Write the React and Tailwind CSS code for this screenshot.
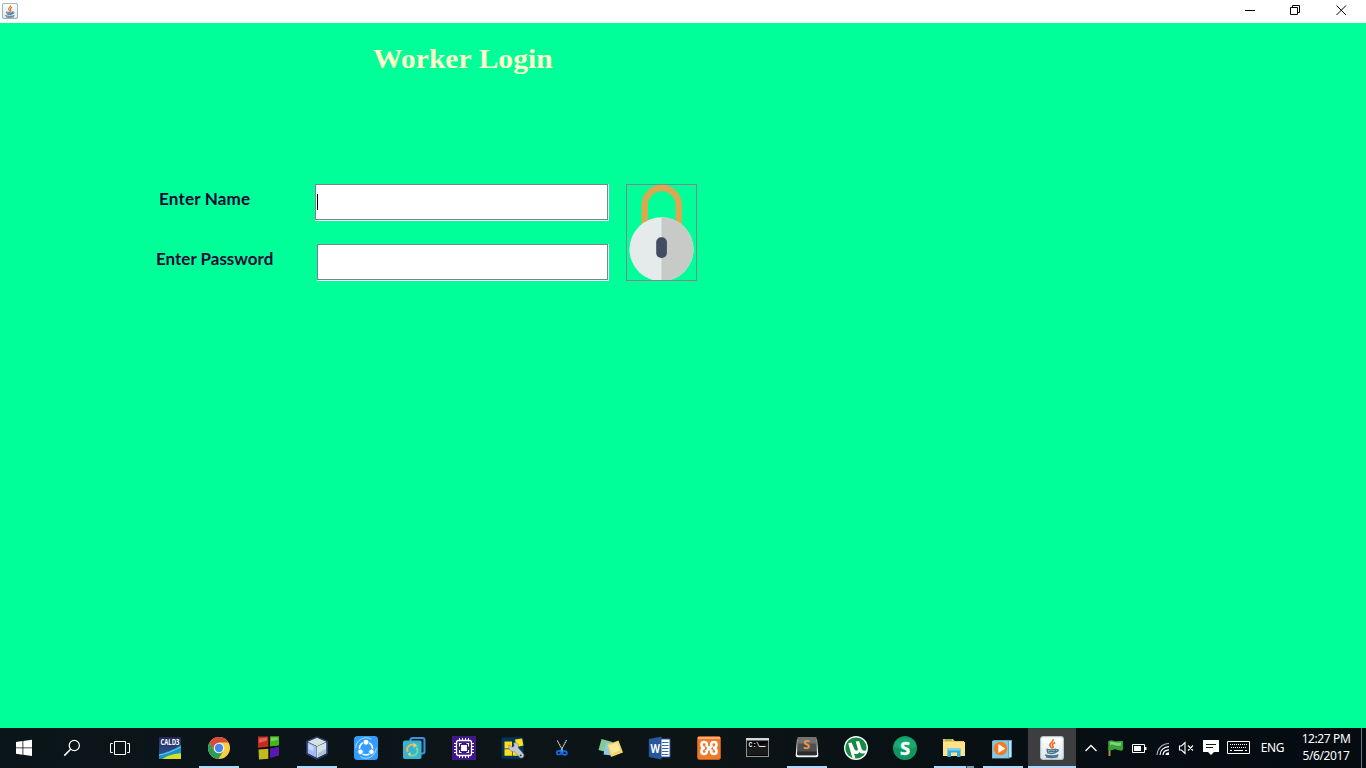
const Java = ({ className, edge = "#b9c2c8" }) => (
  <svg viewBox="0 0 24 24" className={className}>
    <defs>
      <linearGradient id="jv" x1="0" y1="0" x2="0" y2="1">
        <stop offset="0" stopColor="#fff" />
        <stop offset="1" stopColor="#dfe6e9" />
      </linearGradient>
    </defs>
    <rect x="0.6" y="0.6" width="22.800" height="22.800" rx="2.500" fill="url(#jv)" stroke={edge} strokeWidth="1.200" />
    <path d="M12.800 3.300c1.500 2.500-4.200 4-2.800 6.400.5 1 1.600 1.600 1.800 2.600M15.200 6.600c-3 1.200-3.200 2.400-2.200 3.600.5.8 0 1.600-.6 2.200" fill="none" stroke="#e9712a" strokeWidth="1.700" />
    <path d="M6.500 13.200c1.800.9 8 .9 9.700 0M7 13.600l.8 3.200c2 .7 5.200.7 7.200 0l.8-3.200M16 13.800c3-1 3 2-.8 2.400M8.500 15.500h6.500M5 18.800c3.500 1.500 10 1.500 13.500 0M6 20.800c4 1 8.500.8 12-.2" fill="none" stroke="#45718f" strokeWidth="1.400" />
  </svg>
);

const S = ({ children }) => (
  <svg viewBox="0 0 24 24" className="h-6 w-6 shrink-0 overflow-visible">{children}</svg>
);

const Windows = () => (
  <S><path d="M4 6l6.500-1v6.500H4zM11.300 4.900L20 3.800v7.700h-8.700zM4 12.300h6.500v6.500l-6.500-1zM11.300 12.300H20V20l-8.700-1.200z" fill="#fff" /></S>
);
const Search = () => (
  <S><g fill="none" stroke="#fff" strokeWidth="1.200"><circle cx="14.300" cy="9.500" r="5.100" /><path d="M10.600 13.200L4.300 19.600" strokeWidth="1.500" /></g></S>
);
const TaskView = () => (
  <S><path d="M6.500 5.500h11v13h-11zM4.800 7.500H2.500v9h2.300M19.200 7.500h2.300v9h-2.300" fill="none" stroke="#fff" /></S>
);
const Cald = () => (
  <S>
    <defs><linearGradient id="cald" x1="0" y1="0" x2="0" y2="1"><stop stopColor="#24265a" /><stop offset="1" stopColor="#335b9e" /></linearGradient></defs>
    <rect x="1" y="1" width="22" height="22" fill="url(#cald)" />
    <path d="M1 19C8 16 15 14 23 9v9L1 23z" fill="#1395c7" />
    <path d="M1 19c7-1 14-4 22-8" stroke="#75cbe5" fill="none" />
    <path d="M4 23c6-4 12-5 19-6v6z" fill="#d5df28" />
    <text x="2.500" y="8.500" fontSize="8.500" textLength="19" lengthAdjust="spacingAndGlyphs" fontFamily="Open Sans, sans-serif" fontWeight="700" fill="#fff">CALD3</text>
  </S>
);
const Chrome = () => (
  <S>
    <circle cx="12" cy="12" r="11" fill="#fccc43" />
    <path d="M2.500 6.500A11 11 0 0 1 21.500 6.500H12L7.200 14.800z" fill="#d84b3c" />
    <path d="M2.500 6.500A11 11 0 0 0 11.500 23l5-8.300-4.500 2-4.800-2z" fill="#2b9d5b" />
    <circle cx="12" cy="12" r="5.300" fill="#f4f5ef" /><circle cx="12" cy="12" r="4.200" fill="#4688ec" />
  </S>
);
const Blocks = () => (
  <S>
    <path d="M2 .5h10.500V11.500L2 12z" fill="#c72a20" /><path d="M14 .3h9v9.200l-9 1.200z" fill="#43b51b" />
    <path d="M2.500 13.500l10-.8v10L3 23.500z" fill="#c2b921" /><path d="M13.800 12.500l9.200-2v9l-9 2.500z" fill="#5718b5" />
    <path d="M3 2.500l8-1v3L3 7z" fill="#ed8880" opacity=".6" /><path d="M15 1.500h7v2l-7 2z" fill="#a8e48c" opacity=".6" />
    <path d="M13.200 0v24M1.500 12.500L23 10.200" stroke="#090a0a" strokeWidth="1.100" />
  </S>
);
const NetBeans = () => (
  <S>
    <path d="M12 .8l10.300 4.500V18L12 23.200 1.700 18V5.300z" fill="#16264d" stroke="#343f83" />
    <path d="M12 1.800l9.300 4-9.300 4.500-9.300-4.500z" fill="#d5e3df" />
    <path d="M2.700 6.300l9 4.300v11.200l-9-4.500z" fill="#a3b9f2" /><path d="M12 10.500l9.300-4.300v11L12 21.900z" fill="#d5e2e5" />
    <path d="M3.500 8l5 2.300v5L3.500 13z" fill="#dae8ff" opacity=".7" /><path d="M13 17l8-4v4l-8 4z" fill="#a6bdc8" opacity=".8" />
  </S>
);
const Shareit = () => (
  <S>
    <rect width="24" height="24" rx="3.500" fill="#329cff" />
    <circle cx="12" cy="12" r="10.300" fill="none" stroke="#a6dcff" strokeWidth="1" strokeDasharray="22 10" />
    <circle cx="12" cy="12.500" r="6.500" fill="none" stroke="#fff" strokeWidth="1.600" />
    <g fill="#fff" stroke="#329cff" strokeWidth=".9"><circle cx="12" cy="6.200" r="3" /><circle cx="6.500" cy="15.800" r="2.800" /><circle cx="17.500" cy="15.800" r="2.800" /></g>
  </S>
);
const Sync = () => (
  <S>
    <rect x="7.500" y="2" width="14" height="15.500" rx="2" fill="#102a3b" stroke="#4490d5" strokeWidth="2" />
    <rect x="0" y="4.500" width="18.500" height="18.500" rx="2" fill="#36b5cf" />
    <path d="M4.800 16a5 5 0 0 1 7.200-6.500" fill="none" stroke="#f3b35b" strokeWidth="2" />
    <path d="M13.300 11.500a5 5 0 0 1-7.300 6.800" fill="none" stroke="#77d89b" strokeWidth="2" />
    <path d="M10.500 6.800l4 3-4 2zM7.500 16v4.500l-3-2.500z" fill="#e2d276" />
  </S>
);
const Cpu = () => (
  <S>
    <rect width="24" height="24" fill="#411887" />
    <g stroke="#fff" fill="none" strokeWidth="1"><rect x="4.500" y="4.500" width="15" height="15" rx="2" strokeWidth="1.300" />
      <path d="M7.500 2V4m3-2V4m3-2V4m3-2V4M7.500 20v2m3-2v2m3-2v2m3-2v2M2 7.500H4m-2 3H4m-2 3H4m-2 3H4M20 7.500h2m-2 3h2m-2 3h2m-2 3h2" />
      <path d="M7 7.500h2.500m5 0H17M7 16.500h2.500m5 0H17M7.500 8v2.500m9-2.500v2.500M7.500 14v2.500m9-2.500v2.500" />
    </g>
    <rect x="9" y="9" width="6" height="6" fill="#fff" />
  </S>
);
const Tools = () => (
  <S>
    <rect x=".5" y="1" width="22" height="22" rx="2" fill="#073453" stroke="#042139" />
    <path d="M3.500 5.500h7.500v7h-7.500zM3.500 13.200h7.500v6.500h-7.500zM11.700 13.200h6v6.500h-6zM14 3.500l7-1 1.500 7-7 1.500z" fill="#ffdf1c" />
    <path d="M8 8.700l3.200 2.500 2-1.300-.5-3.200c4-.5 5.500 2 4.500 5l5.500 6.500c1 2.500-1.500 4.800-3.800 3.300l-5.500-6C9.500 16.500 7 13 8 8.700z" fill="#c5c8cc" stroke="#68727b" strokeWidth=".5" />
    <circle cx="19.700" cy="19.300" r=".9" fill="#073453" />
  </S>
);
const Scissors = () => (
  <S>
    <path d="M7.300 4.500l6 11M16.500 4l-6 11.500" stroke="#bdbdbd" strokeWidth="1.300" strokeDasharray="1.500 .5" />
    <g fill="none" stroke="#126df0" strokeWidth="1.700"><ellipse cx="9" cy="16.700" rx="2.200" ry="1.800" /><ellipse cx="14.700" cy="17" rx="2.200" ry="1.800" /></g>
    <path d="M11 13.500h2v2h-2z" fill="#22ace5" />
  </S>
);
const Notes = () => (
  <S>
    <path d="M2.500 3l11 3-2.500 11L-.5 14z" fill="#83c994" /><path d="M7 6.500l8 1-2 12-8.500-1z" fill="#92c7e9" />
    <path d="M8.500 8.500l11-4L24 16.500l-12 4.500z" fill="#f4d466" /><path d="M10 9.500l9-3 2 7c-3 3-7 2-8 5z" fill="#ffe89b" />
  </S>
);
const Word = () => (
  <S>
    <path d="M12 3h10v18H12z" fill="#fff" stroke="#2d5799" />
    <path d="M14 6.500h6.500m-6.500 3h6.500m-6.500 3h6.500m-6.500 3h6.500m-6.500 3h6.500" stroke="#3869af" strokeWidth="1" />
    <path d="M.8 3l12.700-2.500v23L.8 21z" fill="#28569d" />
    <text x="2.500" y="16.500" fontSize="11.500" textLength="9.500" lengthAdjust="spacingAndGlyphs" fontFamily="Open Sans, sans-serif" fontWeight="700" fill="#fff">W</text>
  </S>
);
const Xampp = () => (
  <S>
    <rect x=".5" y=".5" width="23" height="23" rx="2" fill="#ef792b" stroke="#bb5921" />
    <path d="M1 1h22v2H1z" fill="#f6ad78" />
    <path d="M15.500 9.500L12.500 12 9 15.500M15 15.500L12 12.300 9.500 9.500" stroke="#fff" strokeWidth="2.400" />
    <path d="M9.800 10V8.200c0-3-5.300-3-5.300.3 0 2.300 1 3.500 3.500 3.500-2.500 0-3.500 1.300-3.500 3.500 0 3.300 5.300 3.300 5.300.3V14M14.200 10V8.200c0-3 5.300-3 5.300.3 0 2.300-1 3.500-3.500 3.500 2.500 0 3.500 1.300 3.500 3.500 0 3.300-5.300 3.300-5.300.3V14" fill="none" stroke="#fff" strokeWidth="2.600" />
  </S>
);
const Terminal = () => (
  <S>
    <rect x=".5" y="2.500" width="22" height="18" fill="#060606" stroke="#929292" /><path d="M0 2h23v2.500H0z" fill="#d4d8d9" />
    <path d="M1 12l21-5v12H1z" fill="#252525" opacity=".65" />
    <text x="2.500" y="11" fontSize="6.500" fontFamily="Liberation Mono, monospace" fontWeight="700" fill="#eee">C:\</text><path d="M13.500 10.500h6" stroke="#eee" />
  </S>
);
const Sublime = () => (
  <S>
    <path d="M2 3L.7 19.500q0 1.800 1.800 1.800h19q1.800 0 1.800-1.800L22 3z" fill="#f3f3f3" />
    <path d="M2.500 1h19l.5 17.500-1.500 1h-17l-1.500-1z" fill="#505050" /><path d="M2.300 15.500h19.400v3.500H2.300z" fill="#2b2b2b" />
    <path d="M2.800 1h18.400l.3 6.500H2.500z" fill="#737373" />
    <text x="11.500" y="13" fontSize="13" fontFamily="Open Sans, sans-serif" fontWeight="700" textAnchor="middle" fill="#eb9841">S</text>
  </S>
);
const Torrent = () => (
  <S>
    <circle cx="12" cy="12" r="12" fill="#f6fff7" /><circle cx="12" cy="12" r="10.600" fill="#178846" />
    <path d="M4.200 7.200l3.300-.6 3 6.700c1 2 3.800 1.700 3.300-.6L11.700 5.500l3.400-.6 2.400 7.700c.6 2 2 2.600 5.300 1.700l-.8 2.500c-3 1.400-5.600.8-6.700-.8-1 2-3 2.700-5.300 1.600l1.500 5-3.200-.9z" fill="#fff" />
  </S>
);
const Skype = () => (
  <S><circle cx="12" cy="12" r="12" fill="#119662" /><path d="M.5 10a12 12 0 0 1 23 0c-6 4-15 5-23 0z" fill="#19aa70" />
    <text x="12" y="18.500" fontSize="18.500" fontFamily="Open Sans, sans-serif" fontWeight="700" textAnchor="middle" fill="#fff" stroke="#fff" strokeWidth=".4">S</text></S>
);
const Folder = () => (
  <S>
    <path d="M1 3h10l1.500 2H22v15H1z" fill="#edc75a" /><path d="M1 6h22v14H1z" fill="#ffe28a" /><path d="M3 4h7" stroke="#4aa666" />
    <path d="M5.500 21v-8.500h13V21H15v-4.500H9V21z" fill="#2eaee6" /><path d="M5.500 12.500h13v2h-13z" fill="#7bd3f5" />
  </S>
);
const Media = () => (
  <S>
    <path d="M1 5l2-1h18v17l-3 1.500H1z" fill="#5fa8cc" /><path d="M1.500 5H17v17H1.500z" fill="#8ac7df" /><path d="M18 5h2v16h-2z" fill="#b8e4ee" />
    <circle cx="9.500" cy="12.500" r="6.800" fill="#f47c20" /><path d="M7.300 8l7 4.500-7 4.500z" fill="#fff" />
  </S>
);

const apps = [
  { Icon: Cald }, { Icon: Chrome, open: true }, { Icon: Blocks }, { Icon: NetBeans, open: true }, { Icon: Shareit },
  { Icon: Sync }, { Icon: Cpu }, { Icon: Tools }, { Icon: Scissors }, { Icon: Notes }, { Icon: Word }, { Icon: Xampp },
  { Icon: Terminal }, { Icon: Sublime, open: true }, { Icon: Torrent }, { Icon: Skype }, { Icon: Folder, open: true, stacked: true },
  { Icon: Media, open: true },
];

function Tray() {
  return (
    <div className="flex h-10 items-center pl-[3px] font-['Noto_Sans',sans-serif] text-xs text-white">
      <S><path d="M6.500 15l5.500-5.500 5.500 5.500" fill="none" stroke="#fff" strokeWidth="1.300" /></S>
      <S>
        <path d="M6.500 5v15" stroke="#bd854c" strokeWidth="2" />
        <path d="M5.500 5c4-2.500 6 1.500 9.500 0h5v9c-4 2-6-1.500-9-.5L5.500 15z" fill="#36a337" />
        <path d="M7 6c3-1 5 1.500 11 .5v3C13 11 10 7 7 9z" fill="#83d37b" />
      </S>
      <S><path d="M5.500 8.500h12v8h-12z" fill="none" stroke="#fff" /><path d="M7 10h7v5H7zM18 11h1.500v3H18z" fill="#fff" /></S>
      <S>
        <g fill="none" strokeWidth="1.200"><path d="M6 19C6.500 12.500 11 7.800 18 7.500" stroke="#a9b0b3" /><path d="M9 19c.3-4.500 3.500-8 9-8.300M12 19c.2-3 2.300-5 6-5.200" stroke="#fff" /></g>
        <path d="M14.500 19c0-1.800 1.500-2.800 3.500-2.800V19z" fill="#fff" />
      </S>
      <S><path d="M4.500 10h2l3.500-3.500v11L6.500 14h-2zM13 9.500l5 5M18 9.500l-5 5" fill="none" stroke="#fff" strokeWidth="1.100" /></S>
      <S><path d="M4 4h16v12h-5l-3 3-3-3H4z" fill="#fff" /><path d="M7 8.500h10M7 11.500h7" stroke="#10191c" /></S>
      <div className="flex w-[31px] justify-center">
        <svg viewBox="0 0 23 14" className="h-[14px] w-[23px]"><path d="M.5.5h22v12H.5z" fill="none" stroke="#fff" /><path d="M3 3.500h17M4 6.500h16" stroke="#fff" strokeDasharray="1 1" /><path d="M3 9.500h2m2 0h9m2 0h2" stroke="#fff" /></svg>
      </div>
      <span className="w-[37px] text-center tracking-[-0.4px]">ENG</span>
      <div className="w-[70px] -translate-y-px text-center leading-[17px] tracking-[-0.4px]">
        <div>12:27 PM</div>
        <div>5/6/2017</div>
      </div>
      <div className="h-10 w-px bg-[#70777a]" />
    </div>
  );
}

function Taskbar() {
  return (
    <footer className="flex h-10 bg-gradient-to-r from-[#0a151a] via-[#0c1416] to-[#040b11]">
      <div className="flex w-[146px]">
        {[Windows, Search, TaskView].map((Icon, i) => (
          <div key={i} className="flex h-10 w-12 items-center justify-center"><Icon /></div>
        ))}
      </div>
      {apps.map(({ Icon, open, stacked }, i) => (
        <div key={i} className="mr-px flex h-10 w-12 flex-col items-center justify-between pt-2">
          <Icon />
          {open && (
            <div className="flex h-0.5 w-10 bg-[#aed8fc]">
              {stacked && <div className="ml-auto h-0.5 w-2 border-l border-[#34434d] bg-[#799bb8]" />}
            </div>
          )}
        </div>
      ))}
      <div className="flex h-10 w-12 flex-col items-center justify-between bg-[#3d3e3f] pt-2">
        <Java className="h-6 w-6" />
        <div className="h-0.5 w-12 bg-[#aed8fc]" />
      </div>
      <Tray />
    </footer>
  );
}

function Padlock() {
  return (
    <div className="h-[97px] w-[71px] border border-[#80858e]">
      <svg viewBox="0 0 69 95" className="h-[95px] w-[69px]">
        <path d="M17.700 43V20a17 17 0 0 1 34 0V43" fill="none" stroke="#daa850" strokeWidth="6.500" />
        <circle cx="34.500" cy="64.300" r="32" fill="#e5ebeb" />
        <path d="M34.500 32.300a32 32 0 0 1 0 64z" fill="#c7cac7" />
        <rect x="29.200" y="52.300" width="10.700" height="20.700" rx="5" fill="#444c63" />
      </svg>
    </div>
  );
}

export default function App() {
  return (
    <div className="flex h-screen w-full flex-col overflow-hidden bg-[#00ff99]">
      <header className="flex h-[23px] shrink-0 items-start justify-between bg-white">
        <Java className="mt-[3px] ml-0.5 h-4 w-4" edge="#7d98a8" />
        <div className="flex">
          <svg viewBox="0 0 45 22" className="h-[22px] w-[45px]"><path d="M16 10.500h10" stroke="#000" /></svg>
          <svg viewBox="0 0 46 22" className="h-[22px] w-[46px]"><path d="M16.500 7.500h7v7h-7zM18.500 7V5.500h7v7H24" fill="none" stroke="#000" /></svg>
          <svg viewBox="0 0 46 22" className="h-[22px] w-[46px]"><path d="M16.500 5.500l9.500 9.500M26 5.500L16.500 15" stroke="#000" /></svg>
        </div>
      </header>
      <main className="flex-1">
        <div className="flex h-[161px] pt-[18px] pl-[373px]">
          <h1 className="h-9 origin-left scale-x-[1.11] whitespace-nowrap font-['Liberation_Serif',serif] text-[26.5px] leading-9 font-bold tracking-[0.1px] text-[#ffffcc]">Worker Login</h1>
        </div>
        <div className="flex">
          <form className="flex w-[626px] flex-col gap-[23px] font-['Lato',sans-serif] text-[17px] leading-5 font-bold">
            <div className="flex h-[37px]">
              <label className="w-[315px] pt-[5px] pl-[159px] tracking-[0.2px] text-[#070738]">Enter Name</label>
              <div className="flex h-[37px] w-[294px] border-r border-b border-white">
                <div className="flex flex-1 border border-[#788590] bg-white pt-[9px] pl-px"><div className="h-4 w-px bg-black" /></div>
              </div>
            </div>
            <div className="flex h-[37px]">
              <label className="w-[317px] pt-[5px] pl-[156px] text-[#250b38]">Enter Password</label>
              <div className="flex h-[37px] w-[292px] border-r border-b border-white">
                <div className="flex-1 border border-[#788590] bg-white" />
              </div>
            </div>
          </form>
          <Padlock />
        </div>
      </main>
      <Taskbar />
    </div>
  );
}
